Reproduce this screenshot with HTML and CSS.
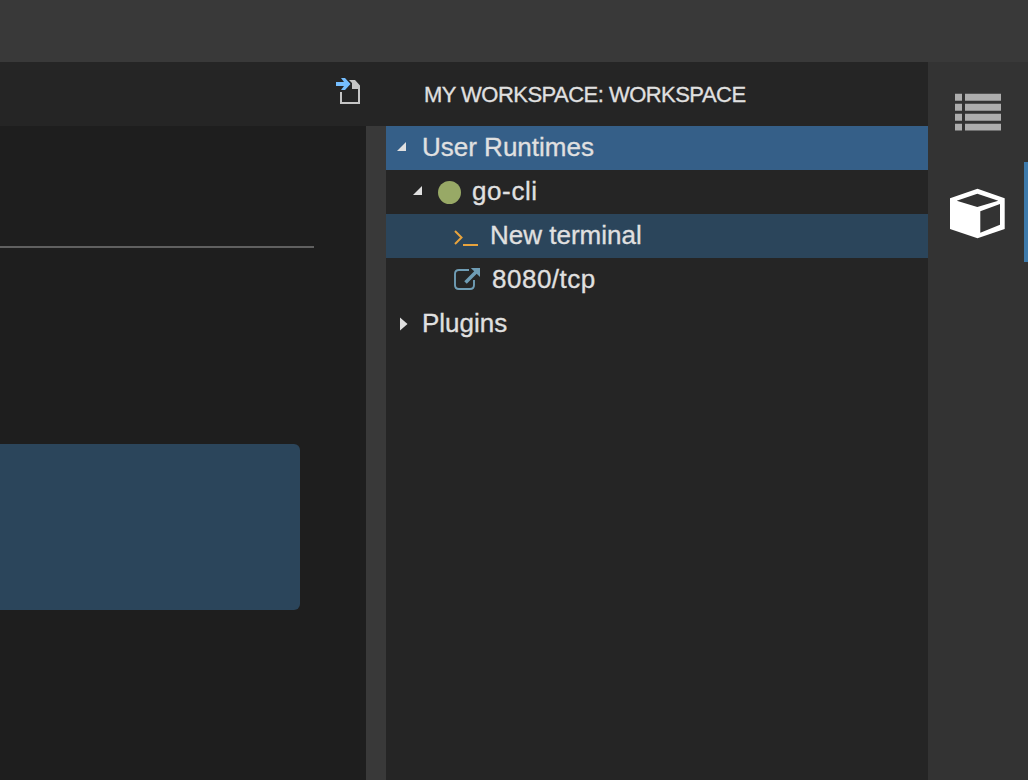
FILE: index.html
```html
<!DOCTYPE html>
<html lang="en">
<head>
<meta charset="utf-8">
<title>My Workspace</title>
<link rel="stylesheet" href="styles.css">
</head>
<body>
<div class="app">
  <header class="topbar"></header>
  <div class="workbench">
    <main class="editor">
      <div class="editor-tabs">
        <svg class="open-file" width="26" height="28" viewBox="0 0 26 28">
          <path d="M5 14V25H23V10" fill="none" stroke="#c5c5c5" stroke-width="2"/>
          <path d="M13 2H19L24 7.5V11H16V5Z" fill="#c5c5c5"/>
          <path d="M5 0H9L14.5 6L9 12H5L8 8H0V4H8Z" fill="#75beff"/>
        </svg>
      </div>
      <div class="editor-body">
        <div class="page">
          <div class="rule"></div>
          <div class="card"></div>
        </div>
        <div class="gutter"></div>
      </div>
    </main>
    <aside class="panel">
      <h2 class="panel-title"><span class="t-title">MY WORKSPACE: WORKSPACE</span></h2>
      <div class="tree">
        <div class="row selected">
          <svg class="caret caret-root" width="10" height="10" viewBox="0 0 10 10"><path d="M9 0V9H0Z"/></svg>
          <span class="t-user">User Runtimes</span>
        </div>
        <div class="row">
          <svg class="caret caret-child" width="10" height="10" viewBox="0 0 10 10"><path d="M9 0V9H0Z"/></svg>
          <span class="status"></span>
          <span class="t-cli">go-cli</span>
        </div>
        <div class="row hovered">
          <svg class="leaf-icon" width="26" height="18" viewBox="0 0 26 18"><path d="M1 2L7.500 8.500L1 15" fill="none" stroke="#e8a33d" stroke-width="2"/><path d="M9 15H24V17H9Z" fill="#e8a33d"/></svg>
          <span class="t-terminal">New terminal</span>
        </div>
        <div class="row">
          <svg class="leaf-icon link-icon" width="27" height="24" viewBox="0 0 27 24"><path d="M15 3H5Q1 3 1 7V18Q1 22 5 22H16Q20 22 20 18V13" fill="none" stroke="#6f9db5" stroke-width="1.9"/><path d="M11.500 15.500L22 5" stroke="#6f9db5" stroke-width="3.600" fill="none"/><path d="M16.800 1H26V10Z" fill="#6f9db5"/></svg>
          <span class="t-port">8080/tcp</span>
        </div>
        <div class="row">
          <svg class="caret caret-closed" width="8" height="14" viewBox="0 0 8 14"><path d="M0 .5L7.500 7L0 13.500Z"/></svg>
          <span class="t-plugins">Plugins</span>
        </div>
      </div>
    </aside>
    <nav class="activity">
      <div class="activity-item">
        <svg class="list-icon" width="46" height="38" viewBox="0 0 46 38" fill="#adadad"><path d="M0 .7H7V7.700H0ZM10 .7H46V7.700H10ZM0 10.700H7V17.700H0ZM10 10.700H46V17.700H10ZM0 20.700H7V27.700H0ZM10 20.700H46V27.700H10ZM0 30.700H7V37.500H0ZM10 30.700H46V37.500H10Z"/></svg>
      </div>
      <div class="activity-item active">
        <svg width="56" height="54" viewBox="0 0 56 54"><path fill="#fff" fill-rule="evenodd" d="M27.500 3.700L54.700 13.300V44L27.500 53.300L0 44V13.300ZM6.700 15.700L27.300 22L48.300 15.700L27.300 8.700ZM30.300 26.300V47.700L50 39.700V19Z"/></svg>
      </div>
    </nav>
  </div>
</div>
</body>
</html>
```
FILE: styles.css
```css
* { box-sizing: border-box; }
body {
  margin: 0;
  overflow: hidden;
  background: #1e1e1e;
  color: #e0e0e0;
  font-family: "Liberation Sans", Arial, sans-serif;
  -webkit-text-stroke: .3px #e0e0e0;
}
.app { display: flex; flex-direction: column; width: 1028px; height: 780px; }
.topbar { height: 62px; flex: none; background: #393939; }
.workbench { display: flex; flex: 1; }
.editor { display: flex; flex-direction: column; width: 386px; }
.editor-tabs {
  display: flex;
  justify-content: flex-end;
  height: 64px;
  padding: 16px 24px 0 0;
  background: #252525;
}
.editor-body { display: flex; flex: 1; }
.page { width: 366px; padding-top: 120px; background: #1e1e1e; }
.rule { width: 314px; height: 2px; background: #606060; }
.card {
  width: 300px;
  height: 166px;
  margin-top: 196px;
  border-radius: 0 6px 6px 0;
  background: #2b455b;
}
.gutter { width: 20px; background: #393939; }
.panel { width: 542px; background: #252525; }
.panel-title {
  display: flex;
  height: 64px;
  margin: 0;
  padding-left: 38px;
  font-size: 22px;
  font-weight: 400;
  line-height: 65px;
}
.row {
  display: flex;
  align-items: center;
  height: 44px;
  font-size: 26px;
  line-height: 42px;
  white-space: nowrap;
}
.row > span:last-child { height: 44px; }
.selected { background: #355f88; }
.hovered { background: #2b455b; }
.caret { fill: #e0e0e0; flex: none; }
.caret-root { margin: 0 15px 2px 11px; }
.caret-child { margin: 0 15px 2px 27px; }
.caret-closed { margin: 0 14px 1px 14px; }
.status {
  width: 23px;
  height: 23px;
  margin: 1px 11px 0 0;
  border-radius: 50%;
  background: #98a966;
}
.leaf-icon { flex: none; margin: 3px 10px 0 68px; }
.link-icon { margin: 0 11px 2px 68px; }
.t-title { letter-spacing: -.53px; }
.t-cli { letter-spacing: .6px; }
.t-port { letter-spacing: .5px; }
.activity { width: 100px; background: #333; }
.activity-item {
  display: flex;
  align-items: center;
  justify-content: center;
  height: 100px;
}
.list-icon { margin-bottom: 1px; }
.active { border-right: 4px solid #3d7aab; padding-left: 4px; }
```
